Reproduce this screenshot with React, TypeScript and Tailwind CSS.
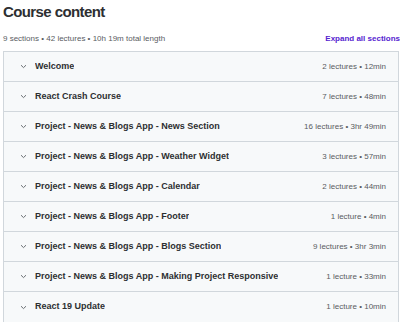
import React from "react";

const sections = [
  { title: "Welcome", meta: "2 lectures • 12min" },
  { title: "React Crash Course", meta: "7 lectures • 48min" },
  { title: "Project - News & Blogs App - News Section", meta: "16 lectures • 3hr 49min" },
  { title: "Project - News & Blogs App - Weather Widget", meta: "3 lectures • 57min" },
  { title: "Project - News & Blogs App - Calendar", meta: "2 lectures • 44min" },
  { title: "Project - News & Blogs App - Footer", meta: "1 lecture • 4min" },
  { title: "Project - News & Blogs App - Blogs Section", meta: "9 lectures • 3hr 3min" },
  { title: "Project - News & Blogs App - Making Project Responsive", meta: "1 lecture • 33min" },
  { title: "React 19 Update", meta: "1 lecture • 10min" },
];

function Chevron() {
  return (
    <svg width="7" height="5" viewBox="0 0 7 5" className="shrink-0">
      <path d="M1 1.2 L3.5 3.6 L6 1.2" fill="none" stroke="#6a6f73" strokeWidth="1" />
    </svg>
  );
}

export default function App() {
  return (
    <div
      className="w-[400px] h-[322px] overflow-hidden bg-white text-[#2d2f31]"
      style={{ fontFamily: '"Liberation Sans", Arial, sans-serif' }}
    >
      <div className="pl-[3px]">
        {/* Header */}
        <h2 className="pt-[4px] text-[15px] leading-[16px] font-bold tracking-[-0.6px]">
          Course content
        </h2>
        <div className="mt-[14px] flex items-center justify-between">
          <span className="text-[8px] leading-[10px] text-[#595c5f]">
            9 sections • 42 lectures • 10h 19m total length
          </span>
          <span className="text-[8px] leading-[10px] font-bold text-[#5624d0] whitespace-nowrap">
            Expand all sections
          </span>
        </div>

        {/* Sections */}
        <div className="mt-[7px] w-[396px] border border-[#d1d7dc]">
          {sections.map((s, i) => (
            <div
              key={s.title}
              className={`h-[30px] flex items-center bg-[#f7f9fa] pl-[16px] pr-[12px] ${
                i < sections.length - 1 ? "border-b border-[#d1d7dc]" : ""
              }`}
            >
              <Chevron />
              <span className="ml-[8px] text-[9px] font-bold truncate">{s.title}</span>
              <span className="ml-auto text-[8px] text-[#595c5f] whitespace-nowrap">{s.meta}</span>
            </div>
          ))}
        </div>
      </div>
    </div>
  );
}
